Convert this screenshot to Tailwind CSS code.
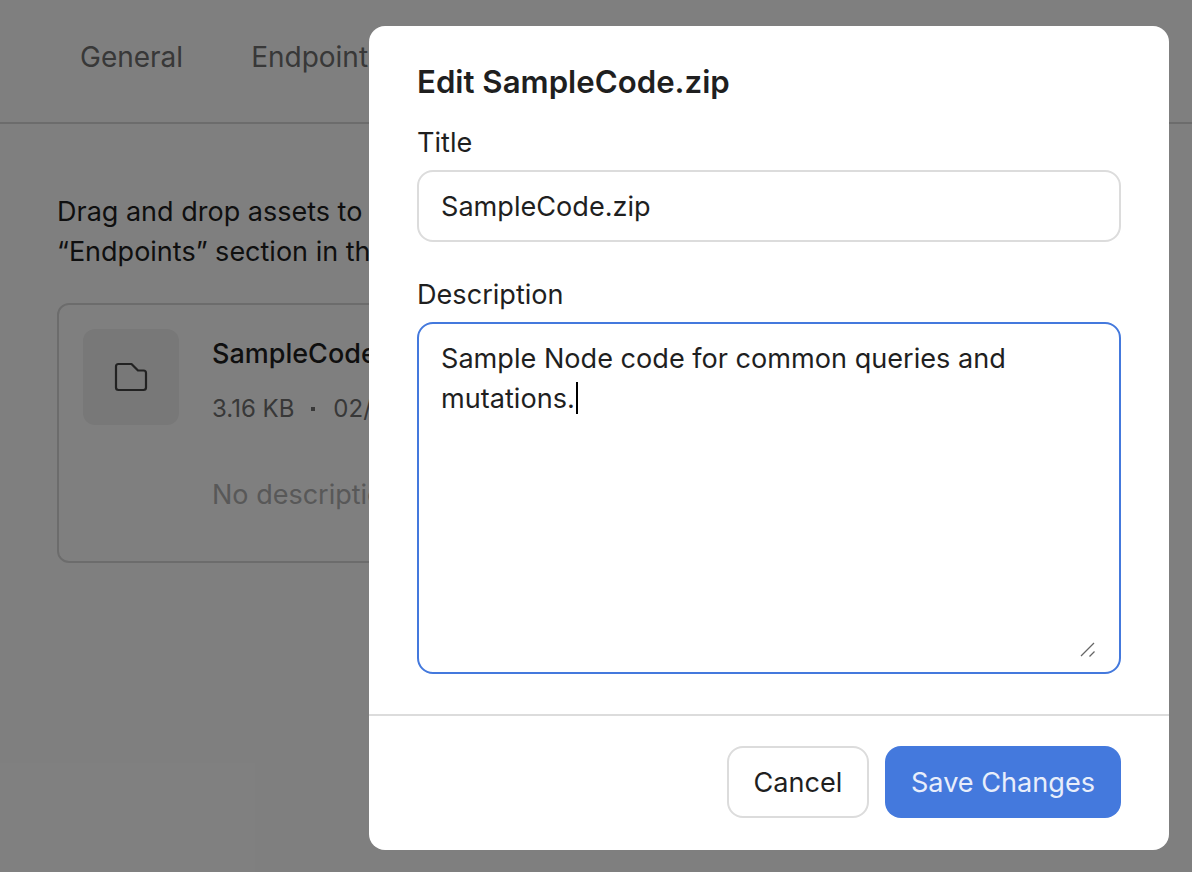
<!DOCTYPE html>
<html lang="en">
<head>
    <meta charset="UTF-8">
    <meta name="viewport" content="width=device-width, initial-scale=1.0">
    <script src="https://cdn.jsdelivr.net/npm/@tailwindcss/browser@4"></script>
    <title>Edit SampleCode.zip</title>
</head>
<body class="bg-white font-['Inter',sans-serif] text-[#1f1f1f] overflow-hidden">
    <div class="w-[1192px] h-[872px] relative overflow-hidden">
        <!-- page behind the modal -->
        <div class="flex gap-[68px] pl-[80px] h-[124px] pt-[38px] border-b-2 border-[#d9d9d9] text-[28px] leading-[38px] text-[#707070]">
            <div>General</div>
            <div>Endpoints</div>
        </div>
        <div class="pl-[57px] pt-[68px] text-[27px] leading-[40px]">
            <div>Drag and drop assets to</div>
            <div>“Endpoints” section in the</div>
        </div>
        <div class="ml-[57px] mt-[31px] w-[700px] h-[260px] border-2 border-[#d9d9d9] rounded-[12px] pl-[24px] pt-[24px] flex gap-[33px]">
            <div class="w-[96px] h-[96px] rounded-[12px] bg-[#f0f0f0] flex items-center justify-center shrink-0">
                <svg width="34" height="34" viewBox="0 0 34 34" fill="none" stroke="#444444" stroke-width="2.200" stroke-linejoin="round"><path d="M2 6.500a2.500 2.500 0 0 1 2.500-2.500h13l6.500 6.500h5.500a2.500 2.500 0 0 1 2.500 2.500v14.500a2.500 2.500 0 0 1-2.500 2.500h-25a2.500 2.500 0 0 1-2.500-2.500z"/></svg>
            </div>
            <div>
                <div class="text-[27px] leading-[38px] font-medium mt-[-7px] pt-[13px]">SampleCode.zip</div>
                <div class="flex items-center text-[24px] leading-[34px] text-[#707070] mt-[19px]">
                    <span>3.16 KB</span>
                    <span class="w-[4px] h-[4px] bg-[#707070] ml-[17px] mr-[18px]"></span>
                    <span>02/</span>
                </div>
                <div class="text-[27px] leading-[38px] text-[#b0b0b0] mt-[50px]">No description</div>
            </div>
        </div>

        <div class="absolute inset-0 bg-black/50"></div>

        <!-- modal -->
        <div class="absolute left-[369px] top-[26px] w-[800px] h-[824px] bg-white rounded-[16px] flex flex-col">
            <div class="px-[48px] pt-[36px] flex-1">
                <h2 class="text-[31.2px] leading-[40px] font-semibold">Edit SampleCode.zip</h2>
                <label class="block text-[27.1px] leading-[38px] mt-[22px]">Title</label>
                <input type="text" value="SampleCode.zip" class="block w-full h-[72px] mt-[8px] px-[22px] text-[27.1px] border-2 border-[#dcdcdc] rounded-[16px] outline-none bg-white text-[#1f1f1f]">
                <label class="block text-[27.1px] leading-[38px] mt-[34px]">Description</label>
                <div class="relative mt-[8px]">
                    <textarea class="block w-full h-[352px] px-[22px] py-[15px] text-[27.1px] leading-[40px] border-2 border-[#4479dd] rounded-[16px] outline-none bg-white text-[#1f1f1f] resize-none">Sample Node code for common queries and mutations.</textarea>
                    <span class="absolute left-[159px] top-[60px] w-[2px] h-[32px] bg-black"></span>
                    <svg class="absolute right-[24px] bottom-[15px]" width="18" height="18" viewBox="0 0 18 18" fill="none" stroke="#666666" stroke-width="1.300"><path d="M15 2L2 15M15.500 10.500L10.500 15.500"/></svg>
                </div>
            </div>
            <div class="border-t-2 border-[#dcdcdc] h-[136px] px-[48px] flex items-start justify-end gap-[16px] pt-[30px]">
                <button class="w-[142px] h-[72px] pt-[2px] border-2 border-[#dcdcdc] rounded-[16px] bg-white text-[27.1px] text-[#1f1f1f]">Cancel</button>
                <button class="w-[236px] h-[72px] pt-[2px] rounded-[16px] bg-[#4479dd] text-[27.1px] text-[#e8eefb]">Save Changes</button>
            </div>
        </div>
    </div>
</body>
</html>
